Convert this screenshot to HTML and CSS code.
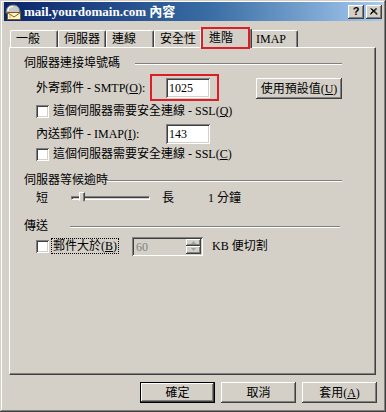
FILE: index.html
```html
<!DOCTYPE html>
<html lang="zh-Hant">
<head>
<meta charset="utf-8">
<title>mail.yourdomain.com 內容</title>
<link rel="stylesheet" href="styles.css">
</head>
<body>
<div class="window">
  <div class="titlebar">
    <svg class="app-icon" width="16" height="16" viewBox="0 0 16 16">
      <path d="M1 9 C1 3 4 1 8 1 C12 1 15 3 15 9 Z" fill="#c8c8c8" stroke="#6c6c6c" stroke-width="1"/>
      <path d="M3 7 C3 4 5 2.5 8 2.5" fill="none" stroke="#ffffff" stroke-width="1.2"/>
      <rect x="2.5" y="8.5" width="13" height="7" fill="#fff6cc" stroke="#7a5a20"/>
      <path d="M2.5 8.5 L9 13 L15.5 8.5" fill="none" stroke="#7a5a20"/>
      <path d="M4 11 H7 M4 13 H6" stroke="#c9a24a"/>
    </svg>
    <span class="title">mail.yourdomain.com 內容</span>
    <div class="caption-buttons">
      <span class="cap-btn help">?</span>
      <span class="cap-btn close">
        <svg width="8" height="7" viewBox="0 0 8 7"><path d="M0.5 0.5 L7 6.5 M1.5 0.5 L7.5 6 M7 0.5 L0.5 6.5 M6 0.5 L0.5 5.5" stroke="#000" stroke-width="1"/></svg>
      </span>
    </div>
  </div>

  <div class="tabs">
    <div class="tab">一般</div>
    <div class="tab">伺服器</div>
    <div class="tab">連線</div>
    <div class="tab">安全性</div>
    <div class="tab selected">進階</div>
    <div class="tab">IMAP</div>
  </div>

  <div class="panel">
    <div class="group-title">
      <span class="gt-text gt-ports">伺服器連接埠號碼</span><span class="etch"></span>
    </div>
    <div class="row row-smtp">
      <span class="label">外寄郵件 - SMTP(<u>O</u>):</span>
      <span class="field">1025</span>
      <span class="btn btn-default-val">使用預設值(<u>U</u>)</span>
    </div>
    <div class="row row-cb1">
      <span class="check"></span><span class="cb-text">這個伺服器需要安全連線 - SSL(<u>Q</u>)</span>
    </div>
    <div class="row row-imap">
      <span class="label">內送郵件 - IMAP(<u>I</u>):</span>
      <span class="field">143</span>
    </div>
    <div class="row row-cb2">
      <span class="check"></span><span class="cb-text">這個伺服器需要安全連線 - SSL(<u>C</u>)</span>
    </div>

    <div class="group-title gt-second">
      <span class="gt-text gt-timeout">伺服器等候逾時</span><span class="etch"></span>
    </div>
    <div class="row row-slider">
      <span class="sl-short">短</span>
      <span class="slider"><span class="track"></span><span class="thumb"></span></span>
      <span class="sl-long">長</span>
      <span class="sl-value">1 分鐘</span>
    </div>

    <div class="group-title gt-third">
      <span class="gt-text gt-send">傳送</span><span class="etch etch-short"></span>
    </div>
    <div class="row row-cb3">
      <span class="check"></span><span class="cb-text focus">郵件大於(<u>B</u>)</span>
      <span class="spin">
        <span class="spin-value">60</span>
        <span class="spin-btns">
          <span class="spin-btn"><svg width="5" height="3" viewBox="0 0 5 3"><path d="M2.5 0 L5 3 H0 Z" fill="#a0a0a0"/></svg></span>
          <span class="spin-btn"><svg width="5" height="3" viewBox="0 0 5 3"><path d="M0 0 H5 L2.5 3 Z" fill="#a0a0a0"/></svg></span>
        </span>
      </span>
      <span class="kb">KB 便切割</span>
    </div>
  </div>

  <div class="buttons">
    <span class="btn dlg-btn default">確定</span>
    <span class="btn dlg-btn">取消</span>
    <span class="btn dlg-btn">套用(<u>A</u>)</span>
  </div>

  <div class="mark mark-tab"></div>
  <div class="mark mark-field"></div>
</div>
</body>
</html>
```

FILE: styles.css
```css
* { box-sizing: border-box; }
html, body { margin: 0; padding: 0; }
body {
  background: #D4D0C8;
  font-family: "Liberation Serif", "Noto Sans CJK TC", serif;
  font-size: 12px;
  line-height: 14px;
  color: #000;
}
u { text-decoration: underline; text-underline-offset: 1px; }

.window {
  position: relative;
  width: 386px;
  height: 412px;
  padding: 2px 4px 4px 4px;
  background: #D4D0C8;
  box-shadow: inset -1px -1px 0 #404040, inset 1px 1px 0 #D4D0C8,
              inset -2px -2px 0 #808080, inset 2px 2px 0 #ffffff;
  display: flex;
  flex-direction: column;
}

/* title bar */
.titlebar {
  height: 19px;
  display: flex;
  align-items: center;
  background: linear-gradient(to right, #0A246A 0%, #3A6EA5 55%, #A6CAF0 100%);
  color: #fff;
  padding-left: 1px;
}
.app-icon { flex: none; display: block; }
.title {
  margin-left: 3px;
  font-weight: bold;
  font-size: 13px;
  letter-spacing: 0;
  white-space: nowrap;
  flex: 1;
}
.caption-buttons { display: flex; gap: 2px; margin-right: 0; }
.cap-btn {
  width: 16px;
  height: 14px;
  background: #D4D0C8;
  box-shadow: inset -1px -1px 0 #404040, inset 1px 1px 0 #ffffff,
              inset -2px -2px 0 #808080;
  color: #000;
  display: flex;
  align-items: center;
  justify-content: center;
}
.cap-btn.help {
  font-family: "Liberation Sans", sans-serif;
  font-weight: bold;
  font-size: 11px;
  line-height: 11px;
  padding-bottom: 1px;
}
.cap-btn svg { display: block; margin-top: -1px; }

/* tabs */
.tabs {
  margin-top: 7px;
  height: 19px;
  padding-left: 6px;
  display: flex;
  align-items: flex-end;
}
.tab {
  width: 48px;
  height: 17px;
  padding-left: 5px;
  display: flex;
  align-items: center;
  background: #D4D0C8;
  border-top: 1px solid #fff;
  border-left: 1px solid #fff;
  border-right: 1px solid #404040;
  border-radius: 2px 2px 0 0;
  box-shadow: inset -1px 0 0 #808080;
  white-space: nowrap;
}
.tab.selected {
  position: relative;
  z-index: 2;
  width: 52px;
  height: 20px;
  margin: 0 -2px -1px -2px;
  padding-left: 8px;
  padding-bottom: 2px;
}

/* panel */
.panel {
  margin-left: 5px;
  width: 367px;
  height: 328px;
  border-top: 1px solid #fff;
  border-left: 1px solid #fff;
  border-right: 1px solid #404040;
  border-bottom: 1px solid #404040;
  box-shadow: inset -1px -1px 0 #808080;
  padding-top: 7px;
  display: flex;
  flex-direction: column;
}
.group-title {
  height: 16px;
  display: flex;
  align-items: center;
  margin-left: 14px;
  margin-right: 33px;
}
.gt-text { flex: none; white-space: nowrap; }
.gt-ports { width: 111px; }
.gt-timeout { width: 83px; }
.gt-send { width: 46px; }
.etch {
  flex: 1;
  height: 2px;
  border-top: 1px solid #808080;
  border-bottom: 1px solid #ffffff;
  margin-top: 2px;
}
.etch-short { margin-right: 2px; }
.gt-second { margin-top: 7px; height: 17px; }
.gt-third { margin-top: 10px; }

.row {
  display: flex;
  align-items: center;
  margin-left: 26px;
  white-space: nowrap;
}
.row-smtp { margin-top: 6px; height: 22px; }
.row-cb1 { height: 24px; }
.row-imap { height: 21px; }
.row-cb2 { height: 20px; }
.row-slider { height: 20px; }
.row-cb3 { margin-top: 1px; height: 22px; }

.label { width: 130px; flex: none; }
.field {
  width: 44px;
  height: 20px;
  flex: none;
  background: #fff;
  padding: 3px 0 0 3px;
  box-shadow: inset 1px 1px 0 #808080, inset -1px -1px 0 #ffffff,
              inset 2px 2px 0 #404040, inset -2px -2px 0 #D4D0C8;
}
.row-smtp .field { margin-right: 46px; }

.btn {
  display: flex;
  align-items: center;
  justify-content: center;
  background: #D4D0C8;
  box-shadow: inset -1px -1px 0 #404040, inset 1px 1px 0 #ffffff,
              inset -2px -2px 0 #808080;
  white-space: nowrap;
}
.btn-default-val { width: 86px; height: 21px; padding-top: 1px; }

.check {
  width: 13px;
  height: 13px;
  flex: none;
  background: #fff;
  box-shadow: inset 1px 1px 0 #808080, inset -1px -1px 0 #ffffff,
              inset 2px 2px 0 #404040, inset -2px -2px 0 #D4D0C8;
}
.cb-text { margin-left: 4px; }
.cb-text.focus {
  width: 66px;
  margin-left: 3px;
  padding-left: 1px;
  height: 14px;
  outline: 1px dotted #000;
  flex: none;
}

.sl-short { width: 35px; flex: none; }
.slider {
  position: relative;
  width: 79px;
  height: 20px;
  flex: none;
  margin-right: 12px;
}
.track {
  position: absolute;
  left: 0;
  right: 0;
  top: 8px;
  height: 4px;
  border-top: 1px solid #808080;
  border-left: 1px solid #808080;
  border-bottom: 1px solid #ffffff;
  border-right: 1px solid #ffffff;
  box-shadow: inset 1px 1px 0 #404040;
  background: #D4D0C8;
}
.thumb {
  position: absolute;
  left: 8px;
  top: 4px;
  width: 6px;
  height: 11px;
  background: #D4D0C8;
  border-left: 1px solid #fff;
  border-top: 1px solid #fff;
  border-right: 1px solid #404040;
  box-shadow: inset -1px 0 0 #808080;
  clip-path: polygon(0 0, 100% 0, 100% 75%, 50% 100%, 0 75%);
}
.sl-long { width: 46px; flex: none; }

.spin {
  margin-left: 14px;
  width: 71px;
  height: 19px;
  flex: none;
  display: flex;
  justify-content: space-between;
  padding: 2px;
  background: #D4D0C8;
  box-shadow: inset 1px 1px 0 #808080, inset -1px -1px 0 #ffffff,
              inset 2px 2px 0 #404040, inset -2px -2px 0 #D4D0C8;
}
.spin-value { color: #808080; padding: 1px 0 0 2px; }
.spin-btns { width: 15px; display: flex; flex-direction: column; }
.spin-btn {
  flex: 1;
  display: flex;
  align-items: center;
  justify-content: center;
  box-shadow: inset -1px -1px 0 #404040, inset 1px 1px 0 #ffffff,
              inset -2px -2px 0 #808080;
}
.spin-btn svg { display: block; }
.kb { margin-left: 9px; }

/* bottom buttons */
.buttons {
  margin-top: 7px;
  margin-right: 5px;
  display: flex;
  justify-content: flex-end;
  gap: 6px;
}
.dlg-btn { width: 75px; height: 21px; padding-top: 1px; }
.dlg-btn.default {
  border: 1px solid #000;
  box-shadow: inset -1px -1px 0 #404040, inset 1px 1px 0 #ffffff,
              inset -2px -2px 0 #808080;
}

/* red annotation boxes */
.mark {
  position: absolute;
  border: 2px solid #dc1f26;
  z-index: 5;
  pointer-events: none;
}
.mark-tab { left: 201px; top: 27px; width: 49px; height: 22px; }
.mark-field { left: 150px; top: 74px; width: 69px; height: 27px; }
```
